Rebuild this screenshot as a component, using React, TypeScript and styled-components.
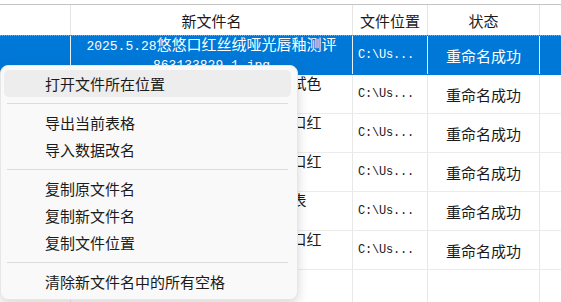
import React from 'react';
import styled, { createGlobalStyle } from 'styled-components';

const GlobalStyle = createGlobalStyle`
  html, body {
    margin: 0;
    padding: 0;
    background: #ffffff;
  }
  body {
    font-family: "Noto Sans CJK SC", "Liberation Sans", sans-serif;
    color: #1a1a1a;
  }
`;

const Page = styled.div`
  position: relative;
  width: 561px;
  height: 302px;
  overflow: hidden;
  background: #ffffff;
  display: flex;
  flex-direction: column;
  padding-top: 4px;
  box-sizing: border-box;
`;

const Table = styled.div`
  flex: 1;
  display: flex;
  flex-direction: column;
  border-top: 1px solid #c4c4c4;
`;

const COLUMNS = '71px 282px 75px 112px 1fr';

const HeaderRow = styled.div`
  display: grid;
  grid-template-columns: ${COLUMNS};
  height: 31px;
  background: #ffffff;
`;

const HeaderCell = styled.div`
  display: flex;
  align-items: center;
  justify-content: center;
  border-right: 1px solid #e4e4e4;
  font-size: 15px;
  color: #1a1a1a;
  &:last-child {
    border-right: none;
  }
`;

const Row = styled.div<{ $selected?: boolean }>`
  display: grid;
  grid-template-columns: ${COLUMNS};
  height: 38px;
  border-bottom: 1px solid ${(p) => (p.$selected ? '#0078d7' : '#ececec')};
  border-top: ${(p) => (p.$selected ? '1px dotted #9aa7b3' : 'none')};
  box-sizing: content-box;
  background: ${(p) => (p.$selected ? '#0078d7' : '#ffffff')};
  color: ${(p) => (p.$selected ? '#ffffff' : '#1a1a1a')};
  margin-top: ${(p) => (p.$selected ? '-1px' : '0')};
`;

const Filler = styled.div`
  flex: 1;
  display: grid;
  grid-template-columns: ${COLUMNS};
`;

const Cell = styled.div<{ $selected?: boolean; $align?: 'left' | 'center' }>`
  display: flex;
  flex-direction: column;
  align-items: ${(p) => (p.$align === 'left' ? 'flex-start' : 'center')};
  justify-content: center;
  padding-left: ${(p) => (p.$align === 'left' ? '5px' : '0')};
  border-right: 1px solid ${(p) => (p.$selected ? '#e8f1fa' : '#e8e8e8')};
  overflow: hidden;
  white-space: nowrap;
  font-size: 15px;
  &:last-child {
    border-right: none;
  }
`;

const NameLine = styled.div`
  line-height: 16px;
  font-size: 15px;
  white-space: nowrap;
`;

const Ascii = styled.span`
  font-family: "Liberation Mono", monospace;
  font-size: 13px;
`;

const Path = styled.span`
  font-family: "Liberation Mono", monospace;
  font-size: 12px;
  letter-spacing: -0.2px;
`;

const Menu = styled.div`
  position: absolute;
  left: 0;
  top: 65px;
  width: 298px;
  padding: 4px 0;
  background: #f9f9f9;
  border: 1px solid #e6e6e6;
  border-radius: 8px;
  box-shadow: 0 4px 12px rgba(0, 0, 0, 0.16);
  box-sizing: border-box;
  display: flex;
  flex-direction: column;
`;

const MenuItem = styled.div<{ $hover?: boolean }>`
  height: 27px;
  display: flex;
  align-items: center;
  margin: 0 6px 0 3px;
  padding-left: 41px;
  border-radius: 5px;
  font-size: 15px;
  color: #1b1b1b;
  background: ${(p) => (p.$hover ? '#ededed' : 'transparent')};
`;

const Separator = styled.div`
  height: 1px;
  margin: 6px 9px 5px 6px;
  background: #dcdcdc;
`;

type FileRow = {
  name: string[];
  selected?: boolean;
};

const rows: FileRow[] = [
  { name: ['2025.5.28悠悠口红丝绒哑光唇釉测评', '863133829_1.jpg'], selected: true },
  { name: ['2025.5.28悠悠口红丝绒哑光试色', '863133830_1.jpg'] },
  { name: ['2025.5.29悠悠丝绒哑光唇釉口红', '863133831_1.jpg'] },
  { name: ['2025.5.30悠悠新品哑光雾面口红', '863133832_1.jpg'] },
  { name: ['2025.5.31悠悠唇釉全色号表', '863133833_1.jpg'] },
  { name: ['2025.6.01悠悠丝绒哑光唇釉口红', '863133834_1.jpg'] },
];

type MenuEntry = { label: string; hover?: boolean } | 'sep';

const menu: MenuEntry[] = [
  { label: '打开文件所在位置', hover: true },
  'sep',
  { label: '导出当前表格' },
  { label: '导入数据改名' },
  'sep',
  { label: '复制原文件名' },
  { label: '复制新文件名' },
  { label: '复制文件位置' },
  'sep',
  { label: '清除新文件名中的所有空格' },
];

// split ascii runs so they get the narrow mono font, like the half-width glyphs
const renderMixed = (text: string) => {
  const parts = text.match(/[\x00-\x7f]+|[^\x00-\x7f]+/g) || [];
  return parts.map((part, i) =>
    /^[\x00-\x7f]+$/.test(part) ? <Ascii key={i}>{part}</Ascii> : <span key={i}>{part}</span>
  );
};

export default function App() {
  return (
    <>
      <GlobalStyle />
      <Page>
        <Table>
          <HeaderRow>
            <HeaderCell />
            <HeaderCell>新文件名</HeaderCell>
            <HeaderCell>文件位置</HeaderCell>
            <HeaderCell>状态</HeaderCell>
            <HeaderCell />
          </HeaderRow>
          {rows.map((row, i) => (
            <Row key={i} $selected={row.selected}>
              <Cell $selected={row.selected} />
              <Cell $selected={row.selected}>
                {row.name.map((line, j) => (
                  <NameLine key={j}>{renderMixed(line)}</NameLine>
                ))}
              </Cell>
              <Cell $selected={row.selected} $align="left">
                <Path>C:\Us...</Path>
              </Cell>
              <Cell $selected={row.selected}>重命名成功</Cell>
              <Cell />
            </Row>
          ))}
          <Filler>
            <Cell />
            <Cell />
            <Cell />
            <Cell />
            <Cell />
          </Filler>
        </Table>
        <Menu>
          {menu.map((entry, i) =>
            entry === 'sep' ? (
              <Separator key={i} />
            ) : (
              <MenuItem key={i} $hover={entry.hover}>
                {entry.label}
              </MenuItem>
            )
          )}
        </Menu>
      </Page>
    </>
  );
}
